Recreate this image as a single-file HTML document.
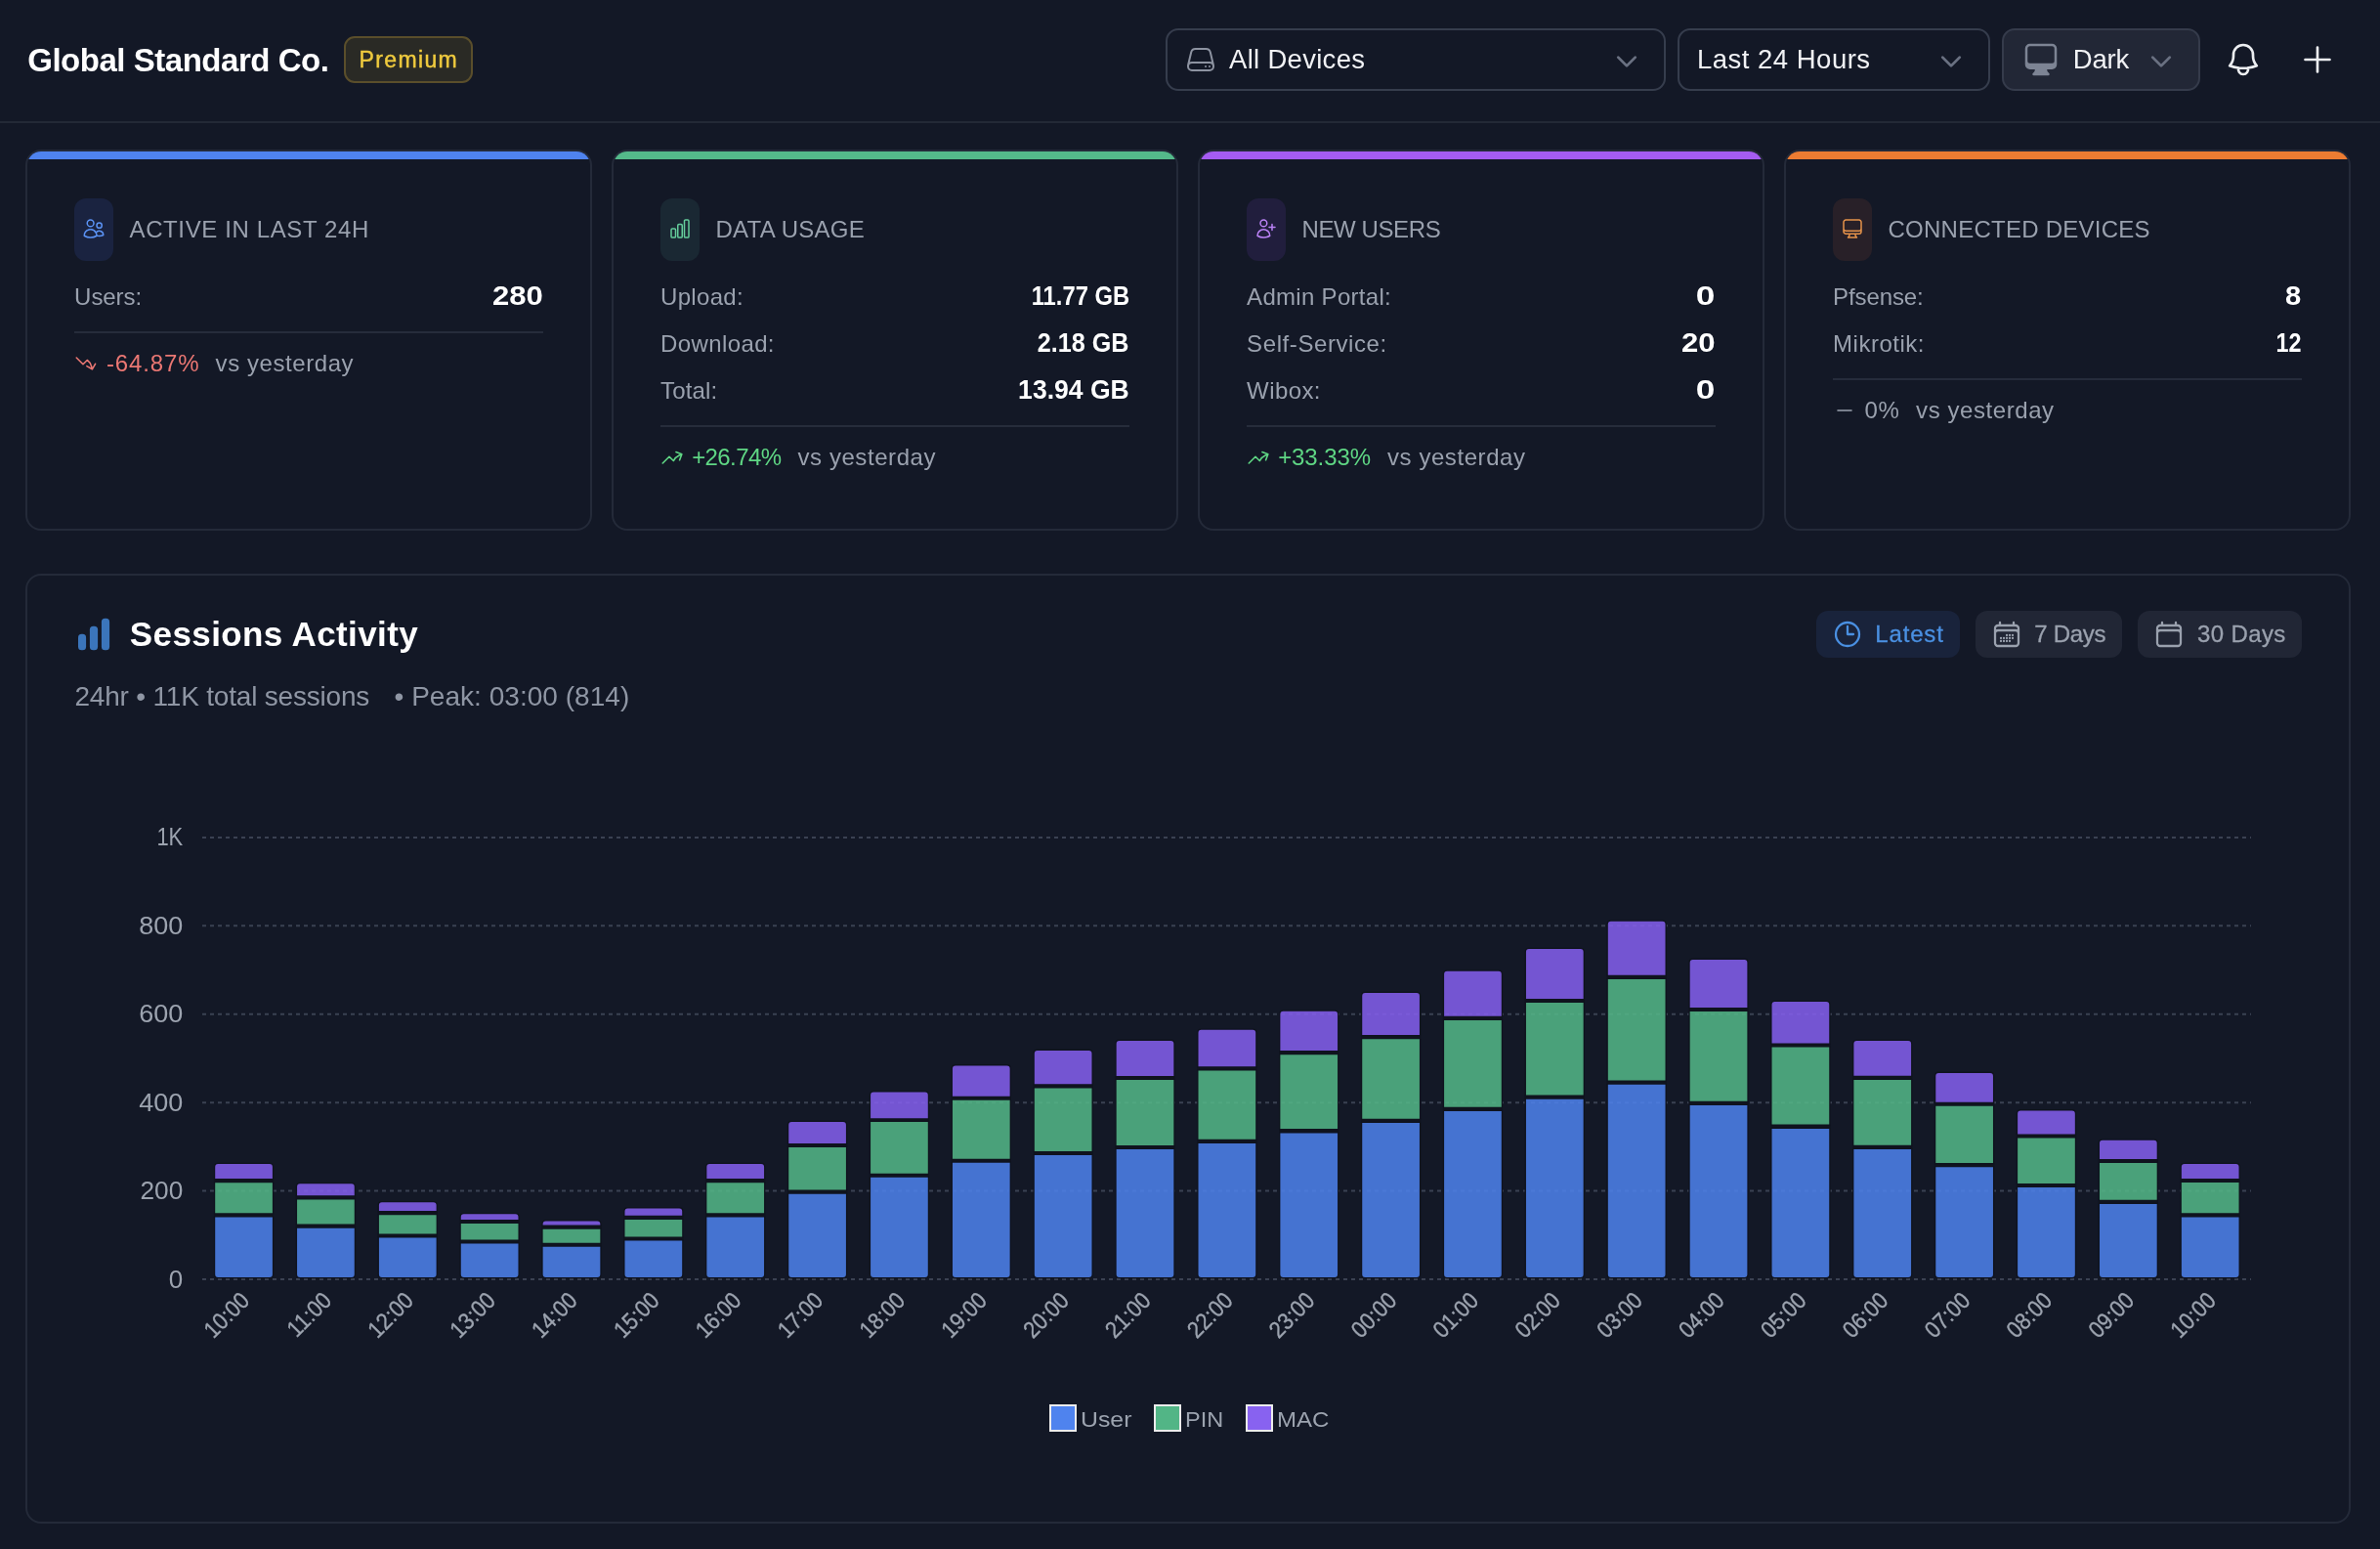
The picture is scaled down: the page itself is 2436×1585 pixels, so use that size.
<!DOCTYPE html>
<html lang="en">
<head>
<meta charset="utf-8">
<title>Global Standard Co. – Dashboard</title>
<style>
*{box-sizing:border-box;margin:0;padding:0}
h1,h2,h3{font-weight:400}
html,body{width:2436px;height:1585px;background:#131826}
body{position:relative;font-family:"Liberation Sans",Arial,Helvetica,sans-serif;color:#f4f5f7;-webkit-font-smoothing:antialiased}
header,.stats,.chart{will-change:transform}
.t{position:absolute;white-space:nowrap;display:block}
.ico{position:absolute;display:block;overflow:visible}
header{position:absolute;left:0;top:0;width:2436px;height:126px;border-bottom:2px solid #232936;background:#131826}
.sel{position:absolute;top:29px;height:64px;border:2px solid #363d4d;border-radius:13px;background:#131826}
.sel.dark{background:#222736;border-color:#353b4b}
.badge{position:absolute;left:352px;top:37px;width:132px;height:48px;border:2px solid #5a4e2b;border-radius:11px;background:#2a2a25}
.stats{position:absolute;left:26px;top:153px;width:2380px;height:390px}
.card{position:absolute;top:0;width:580px;height:390px;border:2px solid #242a39;border-radius:16px;background:#131826;overflow:hidden}
.card .bar{position:absolute;left:0;top:0;width:100%;height:8px}
.card .ib{position:absolute;left:48px;top:48px;width:40px;height:64px;border-radius:12px}
.card hr{position:absolute;left:48px;width:480px;height:2px;border:0;background:#262c3b}
.chart{position:absolute;left:26px;top:587px;width:2380px;height:972px;border:2px solid #242a39;border-radius:16px;background:#131826}
.btn{position:absolute;top:36px;height:48px;border-radius:12px;background:#212635}
.btn.on{background:#19233b}
.lg{position:absolute;width:28px;height:28px;border:2px solid #ececec}
</style>
</head>
<body>

<header>
<h1 class="t" style="top:45.07px;font-size:33px;line-height:33px;color:#ffffff;font-weight:700;letter-spacing:-0.47px;left:28.20px;">Global Standard Co.</h1>
<div class="badge"><span class="t" style="top:11.33px;font-size:23px;line-height:23px;color:#efca3e;letter-spacing:1.35px;left:13.60px;-webkit-text-stroke:0.45px #efca3e;">Premium</span></div>
<div class="sel " style="left:1193px;width:512px"><svg class="ico" viewBox="0 0 24 24" width="32" height="32" style="left:18.00px;top:14.00px"><path fill="none" stroke="#8d93a1" stroke-width="1.5" stroke-linecap="round" stroke-linejoin="round" d="M21.75 17.25v-.228a4.5 4.5 0 0 0-.12-1.03l-2.268-9.64a3.375 3.375 0 0 0-3.285-2.602H7.923a3.375 3.375 0 0 0-3.285 2.602l-2.268 9.64a4.5 4.5 0 0 0-.12 1.03v.228m19.5 0a3 3 0 0 1-3 3H5.25a3 3 0 0 1-3-3m19.5 0a3 3 0 0 0-3-3H5.25a3 3 0 0 0-3 3m16.5 0h.008v.008h-.008v-.008Zm-3 0h.008v.008h-.008v-.008Z"/></svg><span class="t" style="top:15.72px;font-size:27.5px;line-height:27.5px;color:#f1f2f5;letter-spacing:0.3px;left:63.00px;">All Devices</span><svg class="ico" viewBox="0 0 24 24" width="28" height="28" style="left:456.00px;top:18.00px"><path fill="none" stroke="#6a7182" stroke-width="2.4" stroke-linecap="round" stroke-linejoin="round" d="m19.5 8.25-7.5 7.5-7.5-7.5"/></svg></div>
<div class="sel " style="left:1717px;width:320px"><span class="t" style="top:15.72px;font-size:27.5px;line-height:27.5px;color:#f1f2f5;letter-spacing:0.5px;left:17.90px;">Last 24 Hours</span><svg class="ico" viewBox="0 0 24 24" width="28" height="28" style="left:264.00px;top:18.00px"><path fill="none" stroke="#6a7182" stroke-width="2.4" stroke-linecap="round" stroke-linejoin="round" d="m19.5 8.25-7.5 7.5-7.5-7.5"/></svg></div>
<div class="sel dark" style="left:2049px;width:203px"><svg class="ico" viewBox="0 0 24 24" width="40" height="40" style="left:18.00px;top:10.00px"><path fill-rule="evenodd" clip-rule="evenodd" fill="#7d8494" d="M2.25 5.25a3 3 0 0 1 3-3h13.5a3 3 0 0 1 3 3V15a3 3 0 0 1-3 3h-3v.257c0 .597.237 1.17.659 1.591l.621.622a.75.75 0 0 1-.53 1.28h-9a.75.75 0 0 1-.53-1.28l.621-.622a2.25 2.25 0 0 0 .659-1.59V18h-3a3 3 0 0 1-3-3V5.25Zm1.5 0v7.5a1.5 1.5 0 0 0 1.5 1.5h13.5a1.5 1.5 0 0 0 1.5-1.5v-7.5a1.5 1.5 0 0 0-1.5-1.5H5.25a1.5 1.5 0 0 0-1.5 1.5Z"/></svg><span class="t" style="top:15.72px;font-size:27.5px;line-height:27.5px;color:#f1f2f5;letter-spacing:-0.2px;left:70.80px;">Dark</span><svg class="ico" viewBox="0 0 24 24" width="28" height="28" style="left:147.20px;top:18.00px"><path fill="none" stroke="#6a7182" stroke-width="2.4" stroke-linecap="round" stroke-linejoin="round" d="m19.5 8.25-7.5 7.5-7.5-7.5"/></svg></div>
<svg class="ico" viewBox="0 0 24 24" width="40" height="40" style="left:2276.00px;top:41.00px"><path fill="none" stroke="#eceef1" stroke-width="1.6" stroke-linecap="round" stroke-linejoin="round" d="M14.857 17.082a23.848 23.848 0 0 0 5.454-1.31A8.967 8.967 0 0 1 18 9.75V9A6 6 0 0 0 6 9v.75a8.967 8.967 0 0 1-2.312 6.022c1.733.64 3.56 1.085 5.455 1.31m5.714 0a24.255 24.255 0 0 1-5.714 0m5.714 0a3 3 0 1 1-5.714 0"/></svg>
<svg class="ico" viewBox="0 0 24 24" width="40" height="40" style="left:2352.00px;top:41.00px"><path fill="none" stroke="#eceef1" stroke-width="1.6" stroke-linecap="round" stroke-linejoin="round" d="M12 4.5v15m7.5-7.5h-15"/></svg>
</header>
<section class="stats">
<article class="card" style="left:0px">
<div class="bar" style="background:#4f83ee"></div>
<div class="ib" style="background:#1a2340"></div>
<svg class="ico" viewBox="0 0 24 24" width="24" height="24" style="left:56.00px;top:67.20px"><path fill="none" stroke="#5b93f5" stroke-width="1.5" stroke-linecap="round" stroke-linejoin="round" d="M15 19.128a9.38 9.38 0 0 0 2.625.372 9.337 9.337 0 0 0 4.121-.952 4.125 4.125 0 0 0-7.533-2.493M15 19.128v-.003c0-1.113-.285-2.16-.786-3.07M15 19.128v.106A12.318 12.318 0 0 1 8.624 21c-2.331 0-4.512-.645-6.374-1.766l-.001-.109a6.375 6.375 0 0 1 11.964-3.07M12 6.375a3.375 3.375 0 1 1-6.75 0 3.375 3.375 0 0 1 6.75 0Zm8.25 2.25a2.625 2.625 0 1 1-5.25 0 2.625 2.625 0 0 1 5.25 0Z"/></svg>
<h3 class="t" style="top:67.98px;font-size:24px;line-height:24px;color:#9aa1ae;letter-spacing:0.62px;left:104.50px;">ACTIVE IN LAST 24H</h3>
<span class="t" style="top:137.18px;font-size:24px;line-height:24px;color:#9aa1ae;letter-spacing:-0.05px;left:48.10px;">Users:</span>
<span class="t" style="top:133.72px;font-size:27.5px;line-height:27.5px;color:#ffffff;font-weight:700;right:48.30px;transform:scaleX(1.13);transform-origin:100% 50%;">280</span>
<hr style="top:184px">
<svg class="ico" viewBox="0 0 24 24" width="24" height="24" style="left:48.00px;top:204.50px"><path fill="none" stroke="#ea7773" stroke-width="1.6" stroke-linecap="round" stroke-linejoin="round" d="M2.25 6 9 12.75l4.286-4.286a11.948 11.948 0 0 1 4.306 6.43l.776 2.898m0 0 3.182-5.511m-3.182 5.51-5.511-3.181"/></svg>
<span class="t" style="top:204.68px;font-size:24px;line-height:24px;color:#ea7773;letter-spacing:0.85px;left:81.00px;">-64.87%</span>
<span class="t" style="top:204.68px;font-size:24px;line-height:24px;color:#9aa1ae;letter-spacing:0.57px;left:192.60px;">vs yesterday</span>
</article>
<article class="card" style="left:600px">
<div class="bar" style="background:#54b98a"></div>
<div class="ib" style="background:#1a2833"></div>
<svg class="ico" viewBox="0 0 24 24" width="24" height="24" style="left:56.00px;top:67.20px"><path fill="none" stroke="#64cc9b" stroke-width="1.5" stroke-linecap="round" stroke-linejoin="round" d="M3 13.125C3 12.504 3.504 12 4.125 12h2.25c.621 0 1.125.504 1.125 1.125v6.75C7.5 20.496 6.996 21 6.375 21h-2.25A1.125 1.125 0 0 1 3 19.875v-6.75ZM9.75 8.625c0-.621.504-1.125 1.125-1.125h2.25c.621 0 1.125.504 1.125 1.125v11.25c0 .621-.504 1.125-1.125 1.125h-2.25a1.125 1.125 0 0 1-1.125-1.125V8.625ZM16.5 4.125c0-.621.504-1.125 1.125-1.125h2.25C20.496 3 21 3.504 21 4.125v15.75c0 .621-.504 1.125-1.125 1.125h-2.25a1.125 1.125 0 0 1-1.125-1.125V4.125Z"/></svg>
<h3 class="t" style="top:67.98px;font-size:24px;line-height:24px;color:#9aa1ae;letter-spacing:0.27px;left:104.50px;">DATA USAGE</h3>
<span class="t" style="top:137.18px;font-size:24px;line-height:24px;color:#9aa1ae;letter-spacing:0.3px;left:48.10px;">Upload:</span>
<span class="t" style="top:133.72px;font-size:27.5px;line-height:27.5px;color:#ffffff;font-weight:700;right:48.30px;transform:scaleX(0.865);transform-origin:100% 50%;">11.77 GB</span>
<span class="t" style="top:185.18px;font-size:24px;line-height:24px;color:#9aa1ae;letter-spacing:0.38px;left:48.10px;">Download:</span>
<span class="t" style="top:181.72px;font-size:27.5px;line-height:27.5px;color:#ffffff;font-weight:700;right:48.30px;transform:scaleX(0.915);transform-origin:100% 50%;">2.18 GB</span>
<span class="t" style="top:233.18px;font-size:24px;line-height:24px;color:#9aa1ae;letter-spacing:0.12px;left:48.10px;">Total:</span>
<span class="t" style="top:229.72px;font-size:27.5px;line-height:27.5px;color:#ffffff;font-weight:700;right:48.30px;transform:scaleX(0.965);transform-origin:100% 50%;">13.94 GB</span>
<hr style="top:280px">
<svg class="ico" viewBox="0 0 24 24" width="24" height="24" style="left:48.00px;top:300.50px"><path fill="none" stroke="#5fd684" stroke-width="1.6" stroke-linecap="round" stroke-linejoin="round" d="M2.25 18 9 11.25l4.306 4.306a11.95 11.95 0 0 1 5.814-5.518l2.74-1.22m0 0-5.94-2.281m5.94 2.28-2.28 5.941"/></svg>
<span class="t" style="top:300.68px;font-size:24px;line-height:24px;color:#5fd684;letter-spacing:-0.6px;left:80.20px;">+26.74%</span>
<span class="t" style="top:300.68px;font-size:24px;line-height:24px;color:#9aa1ae;letter-spacing:0.57px;left:188.50px;">vs yesterday</span>
</article>
<article class="card" style="left:1200px">
<div class="bar" style="background:#a55cf2"></div>
<div class="ib" style="background:#211e3d"></div>
<svg class="ico" viewBox="0 0 24 24" width="24" height="24" style="left:56.00px;top:67.20px"><path fill="none" stroke="#bb82f6" stroke-width="1.5" stroke-linecap="round" stroke-linejoin="round" d="M18 7.5v3m0 0v3m0-3h3m-3 0h-3m-2.25-4.125a3.375 3.375 0 1 1-6.75 0 3.375 3.375 0 0 1 6.75 0ZM3 19.235v-.11a6.375 6.375 0 0 1 12.75 0v.109A12.318 12.318 0 0 1 9.374 21c-2.331 0-4.512-.645-6.374-1.766Z"/></svg>
<h3 class="t" style="top:67.98px;font-size:24px;line-height:24px;color:#9aa1ae;letter-spacing:-0.4px;left:104.50px;">NEW USERS</h3>
<span class="t" style="top:137.18px;font-size:24px;line-height:24px;color:#9aa1ae;letter-spacing:0.3px;left:48.10px;">Admin Portal:</span>
<span class="t" style="top:133.72px;font-size:27.5px;line-height:27.5px;color:#ffffff;font-weight:700;right:48.30px;transform:scaleX(1.28);transform-origin:100% 50%;">0</span>
<span class="t" style="top:185.18px;font-size:24px;line-height:24px;color:#9aa1ae;letter-spacing:0.59px;left:48.10px;">Self-Service:</span>
<span class="t" style="top:181.72px;font-size:27.5px;line-height:27.5px;color:#ffffff;font-weight:700;right:48.30px;transform:scaleX(1.13);transform-origin:100% 50%;">20</span>
<span class="t" style="top:233.18px;font-size:24px;line-height:24px;color:#9aa1ae;letter-spacing:0.42px;left:48.10px;">Wibox:</span>
<span class="t" style="top:229.72px;font-size:27.5px;line-height:27.5px;color:#ffffff;font-weight:700;right:48.30px;transform:scaleX(1.28);transform-origin:100% 50%;">0</span>
<hr style="top:280px">
<svg class="ico" viewBox="0 0 24 24" width="24" height="24" style="left:48.00px;top:300.50px"><path fill="none" stroke="#5fd684" stroke-width="1.6" stroke-linecap="round" stroke-linejoin="round" d="M2.25 18 9 11.25l4.306 4.306a11.95 11.95 0 0 1 5.814-5.518l2.74-1.22m0 0-5.94-2.281m5.94 2.28-2.28 5.941"/></svg>
<span class="t" style="top:300.68px;font-size:24px;line-height:24px;color:#5fd684;letter-spacing:-0.1px;left:80.20px;">+33.33%</span>
<span class="t" style="top:300.68px;font-size:24px;line-height:24px;color:#9aa1ae;letter-spacing:0.57px;left:192.00px;">vs yesterday</span>
</article>
<article class="card" style="left:1800px">
<div class="bar" style="background:#ec7c32"></div>
<div class="ib" style="background:#282028"></div>
<svg class="ico" viewBox="0 0 24 24" width="24" height="24" style="left:56.00px;top:67.20px"><path fill="none" stroke="#e5924a" stroke-width="1.5" stroke-linecap="round" stroke-linejoin="round" d="M9 17.25v1.007a3 3 0 0 1-.879 2.122L7.5 21h9l-.621-.621A3 3 0 0 1 15 18.257V17.25m6-12V15a2.25 2.25 0 0 1-2.25 2.25H5.25A2.25 2.25 0 0 1 3 15V5.25m18 0A2.25 2.25 0 0 0 18.75 3H5.25A2.25 2.25 0 0 0 3 5.25m18 0V12a2.25 2.25 0 0 1-2.25 2.25H5.25A2.25 2.25 0 0 1 3 12V5.25"/></svg>
<h3 class="t" style="top:67.98px;font-size:24px;line-height:24px;color:#9aa1ae;letter-spacing:0.25px;left:104.50px;">CONNECTED DEVICES</h3>
<span class="t" style="top:137.18px;font-size:24px;line-height:24px;color:#9aa1ae;letter-spacing:-0.1px;left:48.10px;">Pfsense:</span>
<span class="t" style="top:133.72px;font-size:27.5px;line-height:27.5px;color:#ffffff;font-weight:700;right:48.30px;transform:scaleX(1.06);transform-origin:100% 50%;">8</span>
<span class="t" style="top:185.18px;font-size:24px;line-height:24px;color:#9aa1ae;letter-spacing:0.5px;left:48.10px;">Mikrotik:</span>
<span class="t" style="top:181.72px;font-size:27.5px;line-height:27.5px;color:#ffffff;font-weight:700;right:48.30px;transform:scaleX(0.85);transform-origin:100% 50%;">12</span>
<hr style="top:232px">
<svg class="ico" viewBox="0 0 24 24" width="24" height="24" style="left:48.00px;top:252.50px"><path fill="none" stroke="#9aa1ae" stroke-width="1.6" stroke-linecap="round" stroke-linejoin="round" d="M5 12h14"/></svg>
<span class="t" style="top:252.68px;font-size:24px;line-height:24px;color:#9aa1ae;letter-spacing:0.45px;left:80.60px;">0%</span>
<span class="t" style="top:252.68px;font-size:24px;line-height:24px;color:#9aa1ae;letter-spacing:0.57px;left:133.10px;">vs yesterday</span>
</article>
</section>
<section class="chart">
<svg class="ico" width="40" height="40" viewBox="0 0 40 40" style="left:48px;top:40px"><g fill="#3b75bb"><rect x="4" y="19.8" width="8.1" height="16.5" rx="3.6"/><rect x="15.9" y="11.7" width="8.2" height="24.6" rx="3.6"/><rect x="27.9" y="3.8" width="8.2" height="32.5" rx="3.6"/></g></svg>
<h2 class="t" style="top:42.17px;font-size:35px;line-height:35px;color:#ffffff;font-weight:700;letter-spacing:0.4px;left:104.80px;">Sessions Activity</h2>
<span class="t" style="top:109.60px;font-size:28px;line-height:28px;color:#8f96a4;letter-spacing:-0.2px;left:48.50px;">24hr • 11K total sessions</span>
<span class="t" style="top:109.60px;font-size:28px;line-height:28px;color:#8f96a4;letter-spacing:0.03px;left:375.50px;">• Peak: 03:00 (814)</span>
<div class="btn on" style="left:1831px;width:147px"><svg class="ico" viewBox="0 0 24 24" width="32" height="32" style="left:16.00px;top:8.00px"><path fill="none" stroke="#4a90e2" stroke-width="1.7" stroke-linecap="round" stroke-linejoin="round" d="M12 6v6h4.5m4.5 0a9 9 0 1 1-18 0 9 9 0 0 1 18 0Z"/></svg><span class="t" style="top:12.18px;font-size:24px;line-height:24px;color:#4a90e2;letter-spacing:0.84px;left:60.30px;-webkit-text-stroke:0.3px #4a90e2;">Latest</span></div>
<div class="btn" style="left:1994px;width:150px"><svg class="ico" viewBox="0 0 24 24" width="32" height="32" style="left:16.00px;top:8.00px"><path fill="none" stroke="#9aa1ae" stroke-width="1.7" stroke-linecap="round" stroke-linejoin="round" d="M6.75 3v2.25M17.25 3v2.25M3 18.75V7.5a2.25 2.25 0 0 1 2.25-2.25h13.5A2.25 2.25 0 0 1 21 7.5v11.25m-18 0A2.25 2.25 0 0 0 5.25 21h13.5A2.25 2.25 0 0 0 21 18.75m-18 0v-7.5A2.25 2.25 0 0 1 5.25 9h13.5A2.25 2.25 0 0 1 21 11.25v7.5m-9-6h.008v.008H12v-.008ZM12 15h.008v.008H12V15Zm0 2.25h.008v.008H12v-.008ZM9.75 15h.008v.008H9.75V15Zm0 2.25h.008v.008H9.75v-.008ZM7.5 15h.008v.008H7.5V15Zm0 2.25h.008v.008H7.5v-.008Zm6.75-4.5h.008v.008h-.008v-.008Zm0 2.25h.008v.008h-.008V15Zm0 2.25h.008v.008h-.008v-.008Zm2.25-4.5h.008v.008H16.5v-.008Zm0 2.25h.008v.008H16.5V15Z"/></svg><span class="t" style="top:12.18px;font-size:24px;line-height:24px;color:#9aa1ae;letter-spacing:-0.3px;left:60.30px;-webkit-text-stroke:0.3px #9aa1ae;">7 Days</span></div>
<div class="btn" style="left:2160px;width:168px"><svg class="ico" viewBox="0 0 24 24" width="32" height="32" style="left:16.00px;top:8.00px"><path fill="none" stroke="#9aa1ae" stroke-width="1.7" stroke-linecap="round" stroke-linejoin="round" d="M6.75 3v2.25M17.25 3v2.25M3 18.75V7.5a2.25 2.25 0 0 1 2.25-2.25h13.5A2.25 2.25 0 0 1 21 7.5v11.25m-18 0A2.25 2.25 0 0 0 5.25 21h13.5A2.25 2.25 0 0 0 21 18.75m-18 0v-7.5A2.25 2.25 0 0 1 5.25 9h13.5A2.25 2.25 0 0 1 21 11.25v7.5"/></svg><span class="t" style="top:12.18px;font-size:24px;line-height:24px;color:#9aa1ae;letter-spacing:0.38px;left:61.00px;-webkit-text-stroke:0.3px #9aa1ae;">30 Days</span></div>
<svg class="ico" width="2376" height="968" viewBox="28 589 2376 968" style="left:0;top:0" font-family="Liberation Sans, Arial, Helvetica, sans-serif"><g stroke="#3a4152" stroke-width="2" stroke-dasharray="4 4" fill="none"><path d="M207 1309.00H2304"/><path d="M207 1218.58H2304"/><path d="M207 1128.16H2304"/><path d="M207 1037.74H2304"/><path d="M207 947.32H2304"/><path d="M207 856.90H2304"/></g><g fill="#9ca3af" font-size="25" text-anchor="end"><text transform="translate(187.3 1317.50) scale(1.04 1)">0</text><text transform="translate(187.3 1227.08) scale(1.05 1)">200</text><text transform="translate(187.3 1136.66) scale(1.08 1)">400</text><text transform="translate(187.3 1046.24) scale(1.08 1)">600</text><text transform="translate(187.3 955.82) scale(1.08 1)">800</text><text transform="translate(187.3 865.40) scale(0.88 1)">1K</text></g><path fill="#10141f" d="M218.90 1206.10H280.20V1210.20H218.90ZM218.90 1241.20H280.20V1245.50H218.90ZM302.76 1223.30H364.06V1227.60H302.76ZM302.76 1252.50H364.06V1256.80H302.76ZM386.62 1238.90H447.92V1243.20H386.62ZM386.62 1262.60H447.92V1266.60H386.62ZM470.48 1248.00H531.78V1252.00H470.48ZM470.48 1268.40H531.78V1272.40H470.48ZM554.34 1253.50H615.64V1257.80H554.34ZM554.34 1271.70H615.64V1275.70H554.34ZM638.20 1243.70H699.50V1248.00H638.20ZM638.20 1265.40H699.50V1269.40H638.20ZM722.06 1206.10H783.36V1210.20H722.06ZM722.06 1241.20H783.36V1245.50H722.06ZM805.92 1169.90H867.22V1174.10H805.92ZM805.92 1217.60H867.22V1221.70H805.92ZM889.78 1144.20H951.08V1148.10H889.78ZM889.78 1200.80H951.08V1204.70H889.78ZM973.64 1121.70H1034.94V1125.80H973.64ZM973.64 1185.70H1034.94V1189.80H973.64ZM1057.50 1109.20H1118.80V1113.40H1057.50ZM1057.50 1178.00H1118.80V1182.00H1057.50ZM1141.36 1100.90H1202.66V1105.10H1141.36ZM1141.36 1171.90H1202.66V1176.10H1141.36ZM1225.22 1091.30H1286.52V1095.40H1225.22ZM1225.22 1165.80H1286.52V1169.90H1225.22ZM1309.08 1075.00H1370.38V1079.30H1309.08ZM1309.08 1155.10H1370.38V1159.40H1309.08ZM1392.94 1058.90H1454.24V1063.20H1392.94ZM1392.94 1144.80H1454.24V1149.10H1392.94ZM1476.80 1039.80H1538.10V1044.10H1476.80ZM1476.80 1132.70H1538.10V1137.00H1476.80ZM1560.66 1021.90H1621.96V1025.90H1560.66ZM1560.66 1120.40H1621.96V1124.70H1560.66ZM1644.52 997.70H1705.82V1002.00H1644.52ZM1644.52 1105.50H1705.82V1109.80H1644.52ZM1728.38 1031.00H1789.68V1035.10H1728.38ZM1728.38 1126.70H1789.68V1131.00H1728.38ZM1812.24 1067.50H1873.54V1071.50H1812.24ZM1812.24 1150.60H1873.54V1155.00H1812.24ZM1896.10 1100.80H1957.40V1104.90H1896.10ZM1896.10 1171.80H1957.40V1175.90H1896.10ZM1979.96 1127.70H2041.26V1131.80H1979.96ZM1979.96 1190.10H2041.26V1194.30H1979.96ZM2063.82 1160.40H2125.12V1164.40H2063.82ZM2063.82 1210.90H2125.12V1215.10H2063.82ZM2147.68 1186.00H2208.98V1189.90H2147.68ZM2147.68 1227.70H2208.98V1231.90H2147.68ZM2231.54 1206.00H2292.84V1210.10H2231.54ZM2231.54 1241.20H2292.84V1245.50H2231.54Z"/><g stroke="#0f131e" stroke-width="2.6" stroke-linejoin="round" paint-order="stroke"><path fill="#4e82ee" fill-opacity="0.86" d="M220.20 1245.50H278.90V1304.00Q278.90 1307.00 275.90 1307.00H223.20Q220.20 1307.00 220.20 1304.00ZM304.06 1256.80H362.76V1304.00Q362.76 1307.00 359.76 1307.00H307.06Q304.06 1307.00 304.06 1304.00ZM387.92 1266.60H446.62V1304.00Q446.62 1307.00 443.62 1307.00H390.92Q387.92 1307.00 387.92 1304.00ZM471.78 1272.40H530.48V1304.00Q530.48 1307.00 527.48 1307.00H474.78Q471.78 1307.00 471.78 1304.00ZM555.64 1275.70H614.34V1304.00Q614.34 1307.00 611.34 1307.00H558.64Q555.64 1307.00 555.64 1304.00ZM639.50 1269.40H698.20V1304.00Q698.20 1307.00 695.20 1307.00H642.50Q639.50 1307.00 639.50 1304.00ZM723.36 1245.50H782.06V1304.00Q782.06 1307.00 779.06 1307.00H726.36Q723.36 1307.00 723.36 1304.00ZM807.22 1221.70H865.92V1304.00Q865.92 1307.00 862.92 1307.00H810.22Q807.22 1307.00 807.22 1304.00ZM891.08 1204.70H949.78V1304.00Q949.78 1307.00 946.78 1307.00H894.08Q891.08 1307.00 891.08 1304.00ZM974.94 1189.80H1033.64V1304.00Q1033.64 1307.00 1030.64 1307.00H977.94Q974.94 1307.00 974.94 1304.00ZM1058.80 1182.00H1117.50V1304.00Q1117.50 1307.00 1114.50 1307.00H1061.80Q1058.80 1307.00 1058.80 1304.00ZM1142.66 1176.10H1201.36V1304.00Q1201.36 1307.00 1198.36 1307.00H1145.66Q1142.66 1307.00 1142.66 1304.00ZM1226.52 1169.90H1285.22V1304.00Q1285.22 1307.00 1282.22 1307.00H1229.52Q1226.52 1307.00 1226.52 1304.00ZM1310.38 1159.40H1369.08V1304.00Q1369.08 1307.00 1366.08 1307.00H1313.38Q1310.38 1307.00 1310.38 1304.00ZM1394.24 1149.10H1452.94V1304.00Q1452.94 1307.00 1449.94 1307.00H1397.24Q1394.24 1307.00 1394.24 1304.00ZM1478.10 1137.00H1536.80V1304.00Q1536.80 1307.00 1533.80 1307.00H1481.10Q1478.10 1307.00 1478.10 1304.00ZM1561.96 1124.70H1620.66V1304.00Q1620.66 1307.00 1617.66 1307.00H1564.96Q1561.96 1307.00 1561.96 1304.00ZM1645.82 1109.80H1704.52V1304.00Q1704.52 1307.00 1701.52 1307.00H1648.82Q1645.82 1307.00 1645.82 1304.00ZM1729.68 1131.00H1788.38V1304.00Q1788.38 1307.00 1785.38 1307.00H1732.68Q1729.68 1307.00 1729.68 1304.00ZM1813.54 1155.00H1872.24V1304.00Q1872.24 1307.00 1869.24 1307.00H1816.54Q1813.54 1307.00 1813.54 1304.00ZM1897.40 1175.90H1956.10V1304.00Q1956.10 1307.00 1953.10 1307.00H1900.40Q1897.40 1307.00 1897.40 1304.00ZM1981.26 1194.30H2039.96V1304.00Q2039.96 1307.00 2036.96 1307.00H1984.26Q1981.26 1307.00 1981.26 1304.00ZM2065.12 1215.10H2123.82V1304.00Q2123.82 1307.00 2120.82 1307.00H2068.12Q2065.12 1307.00 2065.12 1304.00ZM2148.98 1231.90H2207.68V1304.00Q2207.68 1307.00 2204.68 1307.00H2151.98Q2148.98 1307.00 2148.98 1304.00ZM2232.84 1245.50H2291.54V1304.00Q2291.54 1307.00 2288.54 1307.00H2235.84Q2232.84 1307.00 2232.84 1304.00Z"/><path fill="#54b888" fill-opacity="0.86" d="M220.20 1210.20H278.90V1241.20H220.20ZM304.06 1227.60H362.76V1252.50H304.06ZM387.92 1243.20H446.62V1262.60H387.92ZM471.78 1252.00H530.48V1268.40H471.78ZM555.64 1257.80H614.34V1271.70H555.64ZM639.50 1248.00H698.20V1265.40H639.50ZM723.36 1210.20H782.06V1241.20H723.36ZM807.22 1174.10H865.92V1217.60H807.22ZM891.08 1148.10H949.78V1200.80H891.08ZM974.94 1125.80H1033.64V1185.70H974.94ZM1058.80 1113.40H1117.50V1178.00H1058.80ZM1142.66 1105.10H1201.36V1171.90H1142.66ZM1226.52 1095.40H1285.22V1165.80H1226.52ZM1310.38 1079.30H1369.08V1155.10H1310.38ZM1394.24 1063.20H1452.94V1144.80H1394.24ZM1478.10 1044.10H1536.80V1132.70H1478.10ZM1561.96 1025.90H1620.66V1120.40H1561.96ZM1645.82 1002.00H1704.52V1105.50H1645.82ZM1729.68 1035.10H1788.38V1126.70H1729.68ZM1813.54 1071.50H1872.24V1150.60H1813.54ZM1897.40 1104.90H1956.10V1171.80H1897.40ZM1981.26 1131.80H2039.96V1190.10H1981.26ZM2065.12 1164.40H2123.82V1210.90H2065.12ZM2148.98 1189.90H2207.68V1227.70H2148.98ZM2232.84 1210.10H2291.54V1241.20H2232.84Z"/><path fill="#8560ef" fill-opacity="0.86" d="M220.20 1194.00Q220.20 1191.00 223.20 1191.00H275.90Q278.90 1191.00 278.90 1194.00V1206.10H220.20ZM304.06 1214.20Q304.06 1211.20 307.06 1211.20H359.76Q362.76 1211.20 362.76 1214.20V1223.30H304.06ZM387.92 1233.30Q387.92 1230.30 390.92 1230.30H443.62Q446.62 1230.30 446.62 1233.30V1238.90H387.92ZM471.78 1245.20Q471.78 1242.20 474.78 1242.20H527.48Q530.48 1242.20 530.48 1245.20V1248.00H471.78ZM555.64 1252.50Q555.64 1249.50 558.64 1249.50H611.34Q614.34 1249.50 614.34 1252.50V1253.50H555.64ZM639.50 1239.40Q639.50 1236.40 642.50 1236.40H695.20Q698.20 1236.40 698.20 1239.40V1243.70H639.50ZM723.36 1194.00Q723.36 1191.00 726.36 1191.00H779.06Q782.06 1191.00 782.06 1194.00V1206.10H723.36ZM807.22 1150.90Q807.22 1147.90 810.22 1147.90H862.92Q865.92 1147.90 865.92 1150.90V1169.90H807.22ZM891.08 1120.50Q891.08 1117.50 894.08 1117.50H946.78Q949.78 1117.50 949.78 1120.50V1144.20H891.08ZM974.94 1093.40Q974.94 1090.40 977.94 1090.40H1030.64Q1033.64 1090.40 1033.64 1093.40V1121.70H974.94ZM1058.80 1077.90Q1058.80 1074.90 1061.80 1074.90H1114.50Q1117.50 1074.90 1117.50 1077.90V1109.20H1058.80ZM1142.66 1067.90Q1142.66 1064.90 1145.66 1064.90H1198.36Q1201.36 1064.90 1201.36 1067.90V1100.90H1142.66ZM1226.52 1056.70Q1226.52 1053.70 1229.52 1053.70H1282.22Q1285.22 1053.70 1285.22 1056.70V1091.30H1226.52ZM1310.38 1037.80Q1310.38 1034.80 1313.38 1034.80H1366.08Q1369.08 1034.80 1369.08 1037.80V1075.00H1310.38ZM1394.24 1018.90Q1394.24 1015.90 1397.24 1015.90H1449.94Q1452.94 1015.90 1452.94 1018.90V1058.90H1394.24ZM1478.10 996.70Q1478.10 993.70 1481.10 993.70H1533.80Q1536.80 993.70 1536.80 996.70V1039.80H1478.10ZM1561.96 974.00Q1561.96 971.00 1564.96 971.00H1617.66Q1620.66 971.00 1620.66 974.00V1021.90H1561.96ZM1645.82 945.80Q1645.82 942.80 1648.82 942.80H1701.52Q1704.52 942.80 1704.52 945.80V997.70H1645.82ZM1729.68 984.90Q1729.68 981.90 1732.68 981.90H1785.38Q1788.38 981.90 1788.38 984.90V1031.00H1729.68ZM1813.54 1028.00Q1813.54 1025.00 1816.54 1025.00H1869.24Q1872.24 1025.00 1872.24 1028.00V1067.50H1813.54ZM1897.40 1068.00Q1897.40 1065.00 1900.40 1065.00H1953.10Q1956.10 1065.00 1956.10 1068.00V1100.80H1897.40ZM1981.26 1100.90Q1981.26 1097.90 1984.26 1097.90H2036.96Q2039.96 1097.90 2039.96 1100.90V1127.70H1981.26ZM2065.12 1139.40Q2065.12 1136.40 2068.12 1136.40H2120.82Q2123.82 1136.40 2123.82 1139.40V1160.40H2065.12ZM2148.98 1169.80Q2148.98 1166.80 2151.98 1166.80H2204.68Q2207.68 1166.80 2207.68 1169.80V1186.00H2148.98ZM2232.84 1194.00Q2232.84 1191.00 2235.84 1191.00H2288.54Q2291.54 1191.00 2291.54 1194.00V1206.00H2232.84Z"/></g><g fill="#9ca3af" stroke="#9ca3af" stroke-width="0.35" font-size="24" text-anchor="end"><text transform="translate(256.85 1332.3) rotate(-45) scale(0.9 1)">10:00</text><text transform="translate(340.71 1332.3) rotate(-45) scale(0.9 1)">11:00</text><text transform="translate(424.57 1332.3) rotate(-45) scale(0.9 1)">12:00</text><text transform="translate(508.43 1332.3) rotate(-45) scale(0.9 1)">13:00</text><text transform="translate(592.29 1332.3) rotate(-45) scale(0.9 1)">14:00</text><text transform="translate(676.15 1332.3) rotate(-45) scale(0.9 1)">15:00</text><text transform="translate(760.01 1332.3) rotate(-45) scale(0.9 1)">16:00</text><text transform="translate(843.87 1332.3) rotate(-45) scale(0.9 1)">17:00</text><text transform="translate(927.73 1332.3) rotate(-45) scale(0.9 1)">18:00</text><text transform="translate(1011.59 1332.3) rotate(-45) scale(0.9 1)">19:00</text><text transform="translate(1095.45 1332.3) rotate(-45) scale(0.9 1)">20:00</text><text transform="translate(1179.31 1332.3) rotate(-45) scale(0.9 1)">21:00</text><text transform="translate(1263.17 1332.3) rotate(-45) scale(0.9 1)">22:00</text><text transform="translate(1347.03 1332.3) rotate(-45) scale(0.9 1)">23:00</text><text transform="translate(1430.89 1332.3) rotate(-45) scale(0.9 1)">00:00</text><text transform="translate(1514.75 1332.3) rotate(-45) scale(0.9 1)">01:00</text><text transform="translate(1598.61 1332.3) rotate(-45) scale(0.9 1)">02:00</text><text transform="translate(1682.47 1332.3) rotate(-45) scale(0.9 1)">03:00</text><text transform="translate(1766.33 1332.3) rotate(-45) scale(0.9 1)">04:00</text><text transform="translate(1850.19 1332.3) rotate(-45) scale(0.9 1)">05:00</text><text transform="translate(1934.05 1332.3) rotate(-45) scale(0.9 1)">06:00</text><text transform="translate(2017.91 1332.3) rotate(-45) scale(0.9 1)">07:00</text><text transform="translate(2101.77 1332.3) rotate(-45) scale(0.9 1)">08:00</text><text transform="translate(2185.63 1332.3) rotate(-45) scale(0.9 1)">09:00</text><text transform="translate(2269.49 1332.3) rotate(-45) scale(0.9 1)">10:00</text></g></svg>
<i class="lg" style="left:1046.0px;top:848.0px;background:#4f83ee"></i>
<span class="t" style="top:852.00px;font-size:22.8px;line-height:22.8px;color:#9ca3af;left:1078.30px;transform:scaleX(1.09);transform-origin:0 50%;">User</span>
<i class="lg" style="left:1153.0px;top:848.0px;background:#52b586"></i>
<span class="t" style="top:852.00px;font-size:22.8px;line-height:22.8px;color:#9ca3af;left:1185.00px;transform:scaleX(1.03);transform-origin:0 50%;">PIN</span>
<i class="lg" style="left:1247.0px;top:848.0px;background:#8862f0"></i>
<span class="t" style="top:852.00px;font-size:22.8px;line-height:22.8px;color:#9ca3af;left:1278.60px;transform:scaleX(1.055);transform-origin:0 50%;">MAC</span>
</section>
</body></html>
